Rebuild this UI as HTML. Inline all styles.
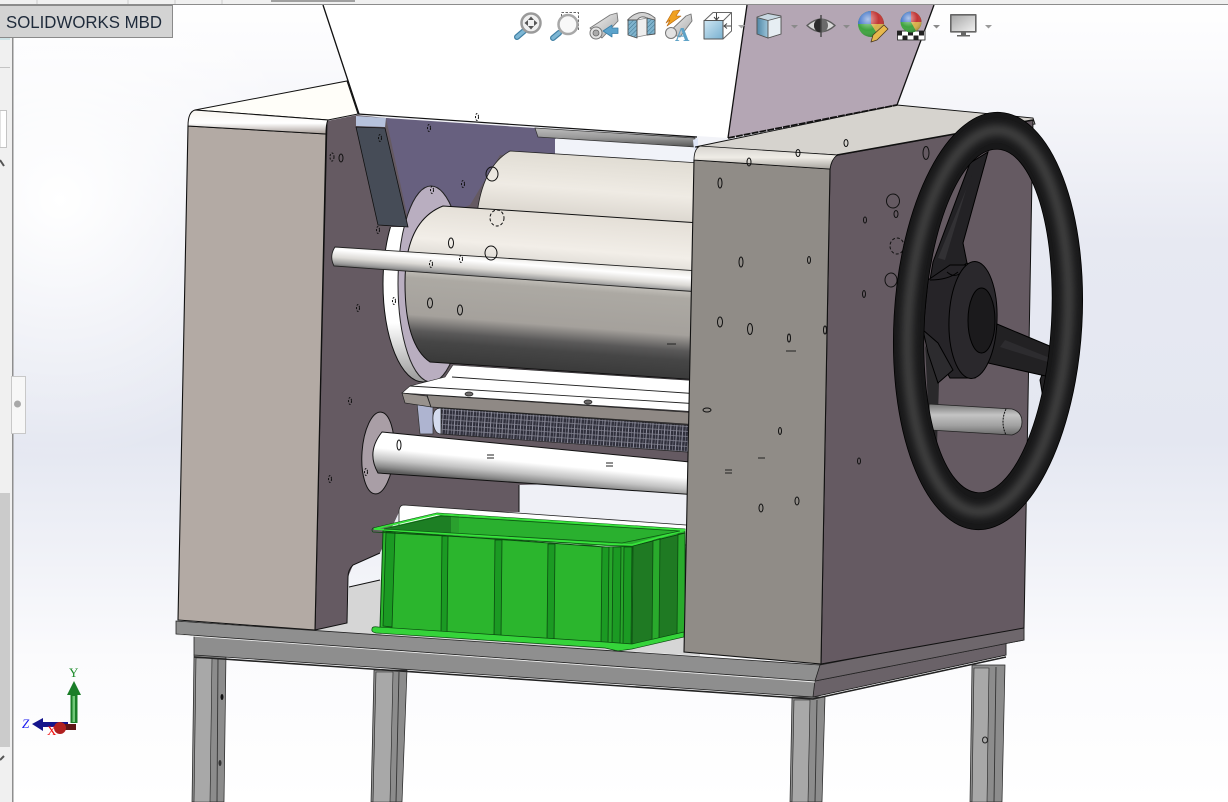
<!DOCTYPE html>
<html><head><meta charset="utf-8"><style>
html,body{margin:0;padding:0;width:1228px;height:802px;overflow:hidden;background:#fff}
svg{display:block}
</style></head><body>
<svg xmlns="http://www.w3.org/2000/svg" width="1228" height="802" viewBox="0 0 1228 802" font-family="'Liberation Sans',sans-serif">
<defs>
<linearGradient id="bg" x1="0" y1="0" x2="0" y2="1"><stop offset="0" stop-color="#fff"/><stop offset=".07" stop-color="#fbfbfd"/><stop offset=".3" stop-color="#e7e9f2"/><stop offset=".55" stop-color="#e4e7f1"/><stop offset=".82" stop-color="#fbfbfd"/><stop offset="1" stop-color="#fff"/></linearGradient>
<radialGradient id="bgw" cx="60" cy="200" r="260" gradientUnits="userSpaceOnUse"><stop offset="0" stop-color="#fff"/><stop offset="1" stop-color="#fff" stop-opacity="0"/></radialGradient>
<linearGradient id="r1" gradientUnits="userSpaceOnUse" x1="550" y1="213" x2="538" y2="372"><stop offset="0" stop-color="#e4dfd7"/><stop offset=".22" stop-color="#f2eee8"/><stop offset=".39" stop-color="#d2cfc9"/><stop offset=".47" stop-color="#acA9a3"/><stop offset=".7" stop-color="#a5a19c"/><stop offset=".8" stop-color="#5a5959"/><stop offset=".86" stop-color="#464646"/><stop offset="1" stop-color="#383838"/></linearGradient>
<linearGradient id="r2" gradientUnits="userSpaceOnUse" x1="590" y1="155" x2="585" y2="225"><stop offset="0" stop-color="#e0dcd3"/><stop offset=".5" stop-color="#efebe4"/><stop offset="1" stop-color="#d5d0c8"/></linearGradient>
<linearGradient id="sh" gradientUnits="userSpaceOnUse" x1="510" y1="256" x2="508" y2="281"><stop offset="0" stop-color="#e8e6e1"/><stop offset=".3" stop-color="#fff"/><stop offset=".6" stop-color="#dcdad6"/><stop offset=".85" stop-color="#999"/><stop offset="1" stop-color="#555"/></linearGradient>
<linearGradient id="r3" gradientUnits="userSpaceOnUse" x1="540" y1="445" x2="536" y2="486"><stop offset="0" stop-color="#fff"/><stop offset=".45" stop-color="#fff"/><stop offset=".72" stop-color="#c4c4c4"/><stop offset=".9" stop-color="#8a8a8a"/><stop offset="1" stop-color="#5e5e5e"/></linearGradient>
<linearGradient id="fil" x1="0" y1="0" x2="0" y2="1"><stop offset="0" stop-color="#f8f5f0"/><stop offset=".55" stop-color="#fff"/><stop offset="1" stop-color="#a69c96"/></linearGradient>
<linearGradient id="fil2" x1="0" y1="0" x2="0" y2="1"><stop offset="0" stop-color="#d6d3ce"/><stop offset=".5" stop-color="#efece6"/><stop offset="1" stop-color="#a5a29c"/></linearGradient>
<linearGradient id="wr" x1="0" y1="0" x2="0" y2="1"><stop offset="0" stop-color="#fff"/><stop offset=".7" stop-color="#fff"/><stop offset="1" stop-color="#999"/></linearGradient>
<linearGradient id="pin" x1="0" y1="0" x2="0" y2="1"><stop offset="0" stop-color="#757575"/><stop offset=".35" stop-color="#c4c4c4"/><stop offset=".7" stop-color="#a0a0a0"/><stop offset="1" stop-color="#6a6a6a"/></linearGradient>
<linearGradient id="barg" x1="0" y1="0" x2="0" y2="1"><stop offset="0" stop-color="#bcbcbc"/><stop offset=".5" stop-color="#9a9a9a"/><stop offset="1" stop-color="#555"/></linearGradient>
<filter id="b4" x="-30%" y="-30%" width="160%" height="160%"><feGaussianBlur stdDeviation="4"/></filter>
<pattern id="thr" width="6" height="5" patternUnits="userSpaceOnUse" patternTransform="rotate(4)"><rect width="6" height="5" fill="#30303c"/><path d="M0 0V5M3 0V5" stroke="#a5a5b5" stroke-width=".8"/><path d="M0 2.500H6" stroke="#8a8a98" stroke-width=".7"/></pattern>
<pattern id="hat" width="3" height="3" patternUnits="userSpaceOnUse" patternTransform="rotate(45)"><rect width="3" height="3" fill="#7fb3cd"/><path d="M0 0V3" stroke="#3f7590" stroke-width="1"/></pattern>
<linearGradient id="icb" x1="0" y1="0" x2="1" y2="1"><stop offset="0" stop-color="#cfe6f3"/><stop offset="1" stop-color="#78b0cf"/></linearGradient>
<linearGradient id="icb2" x1="0" y1="0" x2="1" y2="0"><stop offset="0" stop-color="#4f86a5"/><stop offset="1" stop-color="#9cc5da"/></linearGradient>
<linearGradient id="mon" x1="0" y1="0" x2="1" y2="1"><stop offset="0" stop-color="#a5a5a5"/><stop offset="1" stop-color="#f2f2f2"/></linearGradient>
<linearGradient id="tube" x1="0" y1="0" x2="1" y2="1"><stop offset="0" stop-color="#f4f4f4"/><stop offset="1" stop-color="#a8a8a8"/></linearGradient>
<radialGradient id="hl" cx=".38" cy=".32" r=".7"><stop offset="0" stop-color="#fff" stop-opacity=".6"/><stop offset=".6" stop-color="#fff" stop-opacity="0"/><stop offset="1" stop-color="#000" stop-opacity=".2"/></radialGradient>
<clipPath id="ringc"><path clip-rule="evenodd" transform="rotate(3.300 988 321)" d="M894 321a94 209 0 1 0 188 0a94 209 0 1 0 -188 0ZM924.500 321a63.500 172 0 1 0 127 0a63.500 172 0 1 0 -127 0Z"/></clipPath>
<clipPath id="below"><rect x="370" y="227" width="120" height="170"/></clipPath>
</defs>

<rect width="1228" height="802" fill="url(#bg)"/>
<rect width="400" height="560" fill="url(#bgw)"/>

<!-- hoppers -->
<path d="M323 5H746L728 138 358 114Z" fill="#fff"/>
<path d="M747 5H934L897 105 728 138Z" fill="#b4a6b4"/>
<path d="M323 5L359 114M747 5L728 138M934 5L897 105" stroke="#111" stroke-width="1.300" fill="none"/>

<!-- left box top -->
<path d="M195 110L347 81 358 114 328 120Z" fill="#fffef9" stroke="#111" stroke-width="1"/>

<!-- inner wall -->
<path d="M327 121L357 115 386 118 556 139V160L700 170V480L519 485V512L400 510 380 553 353 565 348 577 347 623 315 630Z" fill="#655a62"/>
<path d="M386 118L535 128 556 139V155L500 155 470 205 410 228Z" fill="#67607f"/>
<path d="M555 139L697 147V165L555 155Z" fill="#f1f3f9"/>
<path d="M519 485L700 495V535L519 512Z" fill="#eff0f6"/>
<path d="M519 485V512" stroke="#111" fill="none"/>
<path d="M349 587L380 580 700 640V656L316 630 347 623Z" fill="#d6d6d6"/>
<path d="M349 587L380 580" stroke="#111" fill="none"/>
<path d="M380 553L353 565Q348 570 348 577L347 623 315 630" stroke="#111" fill="none"/>
<path d="M327 121L315 630" stroke="#111" fill="none"/>

<!-- top line, bar -->
<path d="M358 114L697 137" stroke="#111" stroke-width="1.200"/>
<path d="M535 128L695 138V147L538 137Z" fill="url(#barg)" stroke="#333" stroke-width=".7"/>
<path d="M693 140L698 138V150L694 150Z" fill="#dfe6f7"/>

<!-- back roller -->
<path d="M510 151L700 163V240H478V207Q485 165 510 151Z" fill="url(#r2)" stroke="#222" stroke-width=".8"/>

<!-- discs -->
<g clip-path="url(#below)"><ellipse cx="423" cy="284" rx="40" ry="98" fill="url(#wr)" stroke="#111"/></g>
<ellipse cx="431" cy="284" rx="33" ry="98" fill="#b9aec0" stroke="#222"/>

<!-- plate -->
<path d="M356 116L386 118 385 127 356 126Z" fill="#b6c2dc"/>
<path d="M356 127L385 128 408 227 378 225Z" fill="#464c57" stroke="#111" stroke-width=".8"/>

<!-- front roller -->
<path d="M443 206L700 223V380L430 362Q405 345 405 283T443 206Z" fill="url(#r1)" stroke="#111" stroke-width="1"/>

<!-- upper shaft -->
<path d="M335 247L700 271V292L334 266Q329 256 335 247Z" fill="url(#sh)" stroke="#222" stroke-width=".9"/>

<!-- plates below roller -->
<path d="M453 365L700 381V412L402 393 410 386 445 377Z" fill="#fff" stroke="#222" stroke-width=".6"/>
<path d="M452 377L700 394M410 386L700 404" stroke="#222" stroke-width=".9"/>

<!-- threaded roll -->
<path d="M417 403H433V434H420Z" fill="#aeb4d0" stroke="#333" stroke-width=".7"/>
<path d="M441 408L700 426V453L441 434Z" fill="url(#thr)" stroke="#222" stroke-width=".7"/>
<path d="M441 408Q432 408 433 421T441 434Z" fill="#d4dbee" stroke="#222" stroke-width=".7"/>
<path d="M402 393L427 396 431 407 405 403Z" fill="#98928d" stroke="#222" stroke-width=".7"/>
<path d="M427 395L700 413V425L431 407Z" fill="#8f8985" stroke="#222" stroke-width=".8"/>
<ellipse cx="469" cy="394" rx="4" ry="2" fill="#6d6a6a" stroke="#222" stroke-width=".7"/>
<ellipse cx="588" cy="402" rx="4" ry="2" fill="#6d6a6a" stroke="#222" stroke-width=".7"/>

<!-- lower shaft -->
<ellipse cx="378" cy="453" rx="16" ry="41" fill="#a99ea6" stroke="#111" transform="rotate(4 378 453)"/>
<path d="M382 432L700 463 698 495 378 473Q366 452 382 432Z" fill="url(#r3)" stroke="#111" stroke-width="1"/>

<!-- white roller behind crate -->
<path d="M404 505L700 526V545H399V512Q399 505 404 505Z" fill="#fff" stroke="#222" stroke-width=".8"/>

<!-- green crate -->
<path d="M385 528L441 515 685 530 685 535 632 546 605 546 383 531Z" fill="#2ab02f"/>
<path d="M385 529L441 515 451 516V533L385 531Z" fill="#1d7f24"/>
<path d="M451 516H459V533H451Z" fill="#2aa02e"/>
<path d="M383 531L605 547V643L380 628Z" fill="#2bb52d" stroke="#0b4a10" stroke-width="1"/>
<path d="M605 547L633 546V647L605 644Z" fill="#27a62b" stroke="#0b4a10" stroke-width=".8"/>
<path d="M633 546L685 533V633L632 646Z" fill="#1f7a23" stroke="#0b4a10" stroke-width=".8"/>
<g fill="#1b9a23" stroke="#0b4a10" stroke-width=".8">
<path d="M442 536H448L447 634 441 633Z"/><path d="M495 540H502L501 638 494 637Z"/><path d="M548 544H555L554 641 547 640Z"/>
<path d="M386 532H395L392 627 383 626Z"/><path d="M602 547H609L608 644H601Z"/><path d="M613 547H621L620 645H612Z"/><path d="M624 547H632L631 646H623Z"/>
<path d="M653 540L660 538 659 638 652 640Z" fill="#29aa2c"/><path d="M678 534L685 533V633L677 635Z" fill="#29aa2c"/>
</g>
<path d="M373 528L437 513 685 529V533L632 546 608 545 373 532Q371 530 373 528Z" fill="none" stroke="#0b4a10" stroke-width=".8"/>
<path d="M374 529L437 514 685 530 632 545 608 544Z" fill="none" stroke="#38e43c" stroke-width="1.800"/>
<path d="M384 529L441 516 680 531 622 543 605 542Z" fill="none" stroke="#0e5a14" stroke-width=".8"/>
<path d="M372 629Q372 626 378 627L605 642 632 644 684 632V637L632 649 618 651 605 648 376 633Q371 632 372 629Z" fill="#35d43a" stroke="#0b4a10" stroke-width=".7"/>

<!-- left box -->
<path d="M188 126L326 134 315 630 178 620Z" fill="#b3aaa4" stroke="#111" stroke-width="1.100"/>
<path d="M188 126Q188 112 195 110L328 120Q326 124 326 134Z" fill="url(#fil)" stroke="#111" stroke-width="1"/>

<!-- table + legs -->
<g fill="#8c8c8c" stroke="#222" stroke-width=".7">
<path d="M194 655H226L224 802H192Z"/><path d="M374 670H407L402 802H371Z"/><path d="M792 697H825L822 802H790Z"/><path d="M972 665H1005L1002 802H970Z"/>
</g>
<g fill="#a8a8a8" stroke="#222" stroke-width=".6"><path d="M196 658H212L210 802H194Z"/><path d="M376 672H393L390 802H373Z"/><path d="M794 700H810L808 802H792Z"/><path d="M974 668H989L987 802H972Z"/></g>
<path d="M218 658L217 802M399 672L396 802M817 700L815 802M996 667L994 802" stroke="#333" stroke-width=".9"/>
<path d="M194 636L815 680 1006 640V655L813 697 194 655Z" fill="#8e8e8e" stroke="#222" stroke-width=".8"/>
<path d="M815 680L1006 640V655L813 697Z" fill="#6a6268" stroke="#222" stroke-width=".8"/>
<path d="M194 657L813 699 1006 657" stroke="#222" stroke-width="1.600" fill="none"/>
<path d="M176 621L820 665 1024 626V640L815 681 176 634Z" fill="#8f8f8f" stroke="#222" stroke-width=".8"/>
<path d="M820 665L1024 626V640L815 681Z" fill="#6e676c" stroke="#222" stroke-width=".8"/>
<path d="M178 635L815 682" stroke="#eee" stroke-width=".9"/>
<ellipse cx="222" cy="697" rx="1.500" ry="3" fill="#111"/><ellipse cx="220" cy="763" rx="1.500" ry="3" fill="#333"/>
<ellipse cx="985" cy="740" rx="2.500" ry="3" fill="none" stroke="#222"/>

<!-- right box -->
<path d="M695 147L897 105 1033 118 1035 124 837 155Z" fill="#d6d3ce" stroke="#111" stroke-width=".9"/>
<path d="M728 138L897 105" stroke="#111" stroke-width="1.800" stroke-dasharray="7 1"/>
<path d="M830 169Q832 157 838 155L1033 120 1024 628 821 664Z" fill="#655a62" stroke="#111" stroke-width="1"/>
<path d="M837 155L1033 120" stroke="#111" stroke-width="1.600"/>
<path d="M694 160L830 169 821 664 684 652Z" fill="#908c87" stroke="#111" stroke-width="1.100"/>
<path d="M694 160Q694 149 700 146L837 155Q831 160 830 169Z" fill="url(#fil2)" stroke="#111" stroke-width=".8"/>

<!-- holes -->
<g fill="none" stroke="#111" stroke-width="1">
<ellipse cx="332" cy="157" rx="2" ry="4" stroke-dasharray="2 1.500"/><ellipse cx="341" cy="158" rx="2" ry="4"/>
<ellipse cx="429" cy="128" rx="1.500" ry="3.500" stroke-dasharray="2 1.500"/><ellipse cx="477" cy="117" rx="1.500" ry="3.500" stroke-dasharray="2 1.500"/><ellipse cx="380" cy="138" rx="1.500" ry="3.500" stroke-dasharray="2 1.500"/>
<ellipse cx="463" cy="184" rx="1.500" ry="3.500" stroke-dasharray="2 1.500"/><ellipse cx="432" cy="190" rx="1.500" ry="3.500" stroke-dasharray="2 1.500"/><ellipse cx="378" cy="230" rx="1.500" ry="3.500" stroke-dasharray="2 1.500"/>
<ellipse cx="492" cy="174" rx="6" ry="7"/><ellipse cx="497" cy="218" rx="7" ry="8" stroke-dasharray="3 2"/>
<ellipse cx="491" cy="253" rx="6" ry="7"/><ellipse cx="451" cy="243" rx="2.500" ry="5"/><ellipse cx="430" cy="303" rx="2.500" ry="5"/><ellipse cx="460" cy="310" rx="2.500" ry="5"/>
<ellipse cx="431" cy="264" rx="1.500" ry="3.500" stroke-dasharray="2 1.500"/><ellipse cx="461" cy="259" rx="1.500" ry="3.500" stroke-dasharray="2 1.500"/><ellipse cx="394" cy="301" rx="1.500" ry="3.500" stroke-dasharray="2 1.500"/><ellipse cx="399" cy="445" rx="2" ry="5"/>
<ellipse cx="358" cy="308" rx="1.500" ry="3.500" stroke-dasharray="2 1.500"/><ellipse cx="350" cy="401" rx="1.500" ry="3.500" stroke-dasharray="2 1.500"/><ellipse cx="330" cy="479" rx="1.500" ry="3.500" stroke-dasharray="2 1.500"/><ellipse cx="366" cy="472" rx="1.500" ry="3.500" stroke-dasharray="2 1.500"/>
<ellipse cx="720" cy="183" rx="2" ry="5"/><ellipse cx="749" cy="162" rx="2" ry="4"/><ellipse cx="798" cy="153" rx="2" ry="3.500"/><ellipse cx="846" cy="143" rx="2" ry="3.500"/>
<ellipse cx="741" cy="262" rx="2" ry="5"/><ellipse cx="809" cy="260" rx="1.500" ry="3.500"/><ellipse cx="720" cy="322" rx="2.500" ry="5"/><ellipse cx="750" cy="329" rx="2.500" ry="5.500"/><ellipse cx="789" cy="338" rx="1.500" ry="4"/><ellipse cx="825" cy="330" rx="1.500" ry="4"/>
<ellipse cx="707" cy="410" rx="4" ry="2"/><ellipse cx="780" cy="431" rx="1.500" ry="3.500"/><ellipse cx="797" cy="501" rx="2" ry="4"/><ellipse cx="761" cy="508" rx="2" ry="4"/>
<ellipse cx="926" cy="153" rx="3" ry="6.500"/><ellipse cx="893" cy="201" rx="6.500" ry="7"/><ellipse cx="896" cy="214" rx="2" ry="3.500"/><ellipse cx="897" cy="246" rx="7" ry="8" stroke-dasharray="3 2"/><ellipse cx="891" cy="280" rx="6" ry="7"/><ellipse cx="865" cy="220" rx="1.500" ry="3"/><ellipse cx="864" cy="294" rx="1.500" ry="3.500"/><ellipse cx="859" cy="461" rx="1.500" ry="3"/>
</g>
<g stroke="#222" stroke-width="1"><path d="M487 455H494M487 458H494M606 463H613M606 466H613M725 470H732M725 473H732M667 344H676M758 458H765M786 351H796"/></g>

<!-- handwheel -->
<path d="M925 345L939 383 937 445H930Z" fill="#2a292b"/>
<path d="M988 152L963 243 967 263 950 275 930 280 933 262 970 163Z" fill="#232225" stroke="#000"/>
<path d="M972 175L938 258 945 260 966 190Z" fill="#323134"/>
<path d="M1052 347L1055 335 1060 347 1055 377 1043 398 1040 380Z" fill="#232224" stroke="#000"/>
<path d="M997 324L1052 347 1050 377 988 363Z" fill="#222123" stroke="#000"/>
<path d="M1005 340L1050 358 1048 362 1000 347Z" fill="#2d2c2f"/>
<path d="M928 280L950 265 975 265 975 378 950 378 923 330Z" fill="#262428" stroke="#000"/>
<path d="M923 330L938 343 953 370 938 383 928 353Z" fill="#2c2b2e" stroke="#000"/>
<path d="M947 272Q958 282 968 263M930 280Q948 280 958 272" fill="none" stroke="#000" stroke-width=".9"/>
<ellipse cx="973" cy="320" rx="24" ry="58.500" fill="#2a282c" stroke="#000" transform="rotate(2 973 320)"/>
<ellipse cx="981.500" cy="320.500" rx="13.500" ry="32.500" fill="#1b1a1c" stroke="#000"/>
<path d="M929 404L1012 409Q1022 412 1022 422T1012 435L930 430Z" fill="url(#pin)" stroke="#222" stroke-width=".8"/>
<path d="M1006 409Q1000 422 1006 435" fill="none" stroke="#111" stroke-dasharray="2 1"/>
<g transform="rotate(3.300 988 321)">
<path fill-rule="evenodd" fill="#181819" stroke="#000" stroke-width=".8" d="M894 321a94 209 0 1 0 188 0a94 209 0 1 0 -188 0ZM924.500 321a63.500 172 0 1 0 127 0a63.500 172 0 1 0 -127 0Z"/>
</g>
<g clip-path="url(#ringc)">
<ellipse cx="988" cy="321" rx="80" ry="191" fill="none" stroke="#3f3f41" stroke-width="11" filter="url(#b4)" transform="rotate(3.300 988 321)"/>
</g>

<!-- left UI -->
<rect x="0" y="0" width="1228" height="4" fill="#f0f0f0"/>
<path d="M37 0V4M128 0V4M175 0V4M222 0V4" stroke="#ccc"/>
<rect x="271" y="0" width="84" height="2" fill="#a0a0a0"/>
<rect x="0" y="4" width="1228" height="1" fill="#8c8c8c"/>
<rect x="0" y="5" width="12" height="797" fill="#f0f0f0"/>
<rect x="12" y="5" width="1.500" height="797" fill="#8e8e8e"/>
<rect x="0" y="38" width="10" height="2" fill="#cfe3e6"/>
<path d="M0 67.500H10" stroke="#c4c4c4"/>
<rect x="0" y="110.500" width="6.500" height="37" fill="#fff" stroke="#c4c4c4"/>
<path d="M0 160L4 166" stroke="#555" stroke-width="2"/>
<rect x="0" y="493" width="10" height="254" fill="#cbcbcb"/>
<path d="M0 760L4 756" stroke="#555" stroke-width="2"/>
<rect x="11.500" y="376.500" width="14" height="57" fill="#f7f7f7" stroke="#c8c8c8"/>
<circle cx="17.500" cy="404" r="3.500" fill="#a8a8a8"/>
<rect x="-1" y="5.500" width="173.500" height="32" fill="#d3d3d3" stroke="#8a8a8a"/>
<text x="6" y="28" font-size="17.500" fill="#1e2a3a" textLength="156" lengthAdjust="spacingAndGlyphs">SOLIDWORKS MBD</text>

<!-- triad -->
<path d="M70.500 723V695H67L74 681 81 695H77.500V723Z" fill="#1a7d28"/>
<path d="M72.500 696H75V722H72.500Z" fill="#70c878"/>
<path d="M32 724L43 718V722H68V727H43V731Z" fill="#14148c"/>
<path d="M62 724H76V730H62Z" fill="#5e1616"/>
<circle cx="60" cy="728" r="6" fill="#b02020"/>
<text x="69" y="677" font-size="13" font-family="'Liberation Serif',serif" fill="#1a8a28">Y</text>
<text x="22" y="728" font-size="13" font-style="italic" font-family="'Liberation Serif',serif" fill="#1a1af0">Z</text>
<text x="47" y="735" font-size="13" font-family="'Liberation Serif',serif" fill="#f01010">X</text>

<!-- toolbar -->
<g stroke-linejoin="round">
<!-- zoom fit -->
<path d="M524 31L517 37" stroke="#3f7fa3" stroke-width="6" stroke-linecap="round"/>
<path d="M524 31L517 37" stroke="#7db6d4" stroke-width="3.500" stroke-linecap="round"/>
<circle cx="531" cy="23" r="9.500" fill="#f0f0f0" stroke="#9a9a9a" stroke-width="2.500"/>
<path d="M531 16.500l-3 3.500h6zM531 29.500l-3-3.500h6zM524.500 23l3.500-3v6zM537.500 23l-3.500-3v6z" fill="#555"/>
<!-- zoom area -->
<rect x="561.500" y="12.500" width="17" height="17" fill="none" stroke="#666" stroke-dasharray="2.500 1.500"/>
<path d="M559 33L553 38" stroke="#3f7fa3" stroke-width="6" stroke-linecap="round"/>
<path d="M559 33L553 38" stroke="#7db6d4" stroke-width="3.500" stroke-linecap="round"/>
<circle cx="568" cy="24.500" r="9.500" fill="#f8f8f8" stroke="#a8a8a8" stroke-width="2.500"/>
<!-- previous view -->
<path d="M590 28L610 15 617 13 618 21 602 38Z" fill="url(#tube)" stroke="#777" stroke-width=".9"/>
<ellipse cx="596" cy="33" rx="6" ry="6" fill="#e2e2e2" stroke="#777"/>
<ellipse cx="596" cy="33" rx="3" ry="3" fill="#aaa" stroke="#666" stroke-width=".8"/>
<path d="M603 31L612 25V28H618V33.500H612V37Z" fill="#5ba3cc" stroke="#3a7fa8" stroke-width=".8"/>
<!-- section -->
<path d="M627.500 20Q641 6 655 18V21L647 18Q641 15 637 20Z" fill="#d2d2d2" stroke="#666" stroke-width=".9"/>
<path d="M637 20V37L647 35V18Z" fill="#eee" stroke="#888" stroke-width=".7"/>
<path d="M628 20L637 20V38L628 35Z" fill="url(#hat)" stroke="#555" stroke-width=".9"/>
<path d="M647 18L655 20V34L647 35Z" fill="url(#hat)" stroke="#555" stroke-width=".9"/>
<!-- dynamic annotation -->
<path d="M668 33L686 16 691 14 692 21 680 37Z" fill="url(#tube)" stroke="#777" stroke-width=".9"/>
<ellipse cx="671" cy="33" rx="5.500" ry="5.500" fill="#e2e2e2" stroke="#777"/>
<path d="M666 23L673 11 680 10 676 16 681 16 667 26 670 20Z" fill="#f0a020" stroke="#b56510" stroke-width=".6"/>
<text x="675" y="41" font-size="20" font-weight="bold" font-family="'Liberation Serif',serif" fill="#5fa3c7">A</text>
<!-- view orientation -->
<path d="M704 21L713 12.500H731.500V31L723 39M723 21L731.500 12.500" fill="#fff" stroke="#666"/>
<rect x="704" y="20.500" width="19" height="18.500" fill="url(#icb)" stroke="#555"/>
<path d="M716.500 13V20M714 17l2.500 3 2.500-3M731 26H724M727 23.500l-3 2.500 3 2.500" stroke="#444" fill="none"/>
<path d="M738 25h7l-3.500 3.500z" fill="#a8a8a8"/>
<!-- display style -->
<path d="M757 17L768 13.500 781 16V34L768 38 757 34Z" fill="#c8d8e2" stroke="#555" stroke-width=".9"/>
<path d="M757 17.500L768 20.500V38L757 34Z" fill="url(#icb2)" stroke="#555" stroke-width=".9"/>
<path d="M768 20.500L781 17V34L768 38Z" fill="#e6eef3" stroke="#555" stroke-width=".9"/>
<path d="M791 25h7l-3.500 3.500z" fill="#8a8a8a"/>
<!-- hide/show -->
<path d="M807 25.500Q821 13 835 25.500Q821 38 807 25.500Z" fill="#d8d8d8" stroke="#5c5c5c" stroke-width="1.500"/>
<circle cx="821" cy="25.500" r="7" fill="#6a6a6a"/>
<path d="M821 18.500A7 7 0 0 0 821 32.500Z" fill="#2b2b2b"/>
<path d="M821 15V37" stroke="#444" stroke-width="1.400"/>
<path d="M843 25h7l-3.500 3.500z" fill="#8a8a8a"/>
<!-- appearance -->
<circle cx="871" cy="24" r="13" fill="#3fa43f"/>
<path d="M871 24L858 24A13 13 0 0 1 871 11Z" fill="#3b6fc6"/>
<path d="M871 24V11A13 13 0 0 1 884 24Z" fill="#c23535"/>
<path d="M871 24H884A13 13 0 0 1 878 35Z" fill="#d8b04a"/>
<circle cx="871" cy="24" r="13" fill="url(#hl)"/>
<path d="M871 42L873 35 884 25 888 29 877 40Z" fill="#e8b84c" stroke="#4a3a20" stroke-width=".8"/>
<!-- scene -->
<rect x="897.500" y="31" width="27.500" height="9" fill="#fff" stroke="#444"/>
<path d="M897 31h5v4.500h-5zM908 31h5v4.500h-5zM919 31h5v4.500h-5zM902.500 35.500h5v4.500h-5zM913.500 35.500h5v4.500h-5z" fill="#222"/>
<circle cx="911" cy="22" r="10.500" fill="#3fa43f"/>
<path d="M911 22L900.500 22A10.500 10.500 0 0 1 911 11.500Z" fill="#3b6fc6"/>
<path d="M911 22V11.500A10.500 10.500 0 0 1 921.500 22Z" fill="#c23535"/>
<path d="M911 22H921.500A10.500 10.500 0 0 1 916 31Z" fill="#d8b04a"/>
<circle cx="911" cy="22" r="10.500" fill="url(#hl)"/>
<path d="M933 25h7l-3.500 3.500z" fill="#8a8a8a"/>
<!-- monitor -->
<rect x="950.800" y="14.800" width="25" height="17" fill="url(#mon)" stroke="#666" stroke-width="1.600"/>
<path d="M961 32h5v3h4v1.500h-13V35h4z" fill="#666"/>
<path d="M985 25h7l-3.500 3.500z" fill="#9a9a9a"/>
</g>
</svg>
</body></html>
